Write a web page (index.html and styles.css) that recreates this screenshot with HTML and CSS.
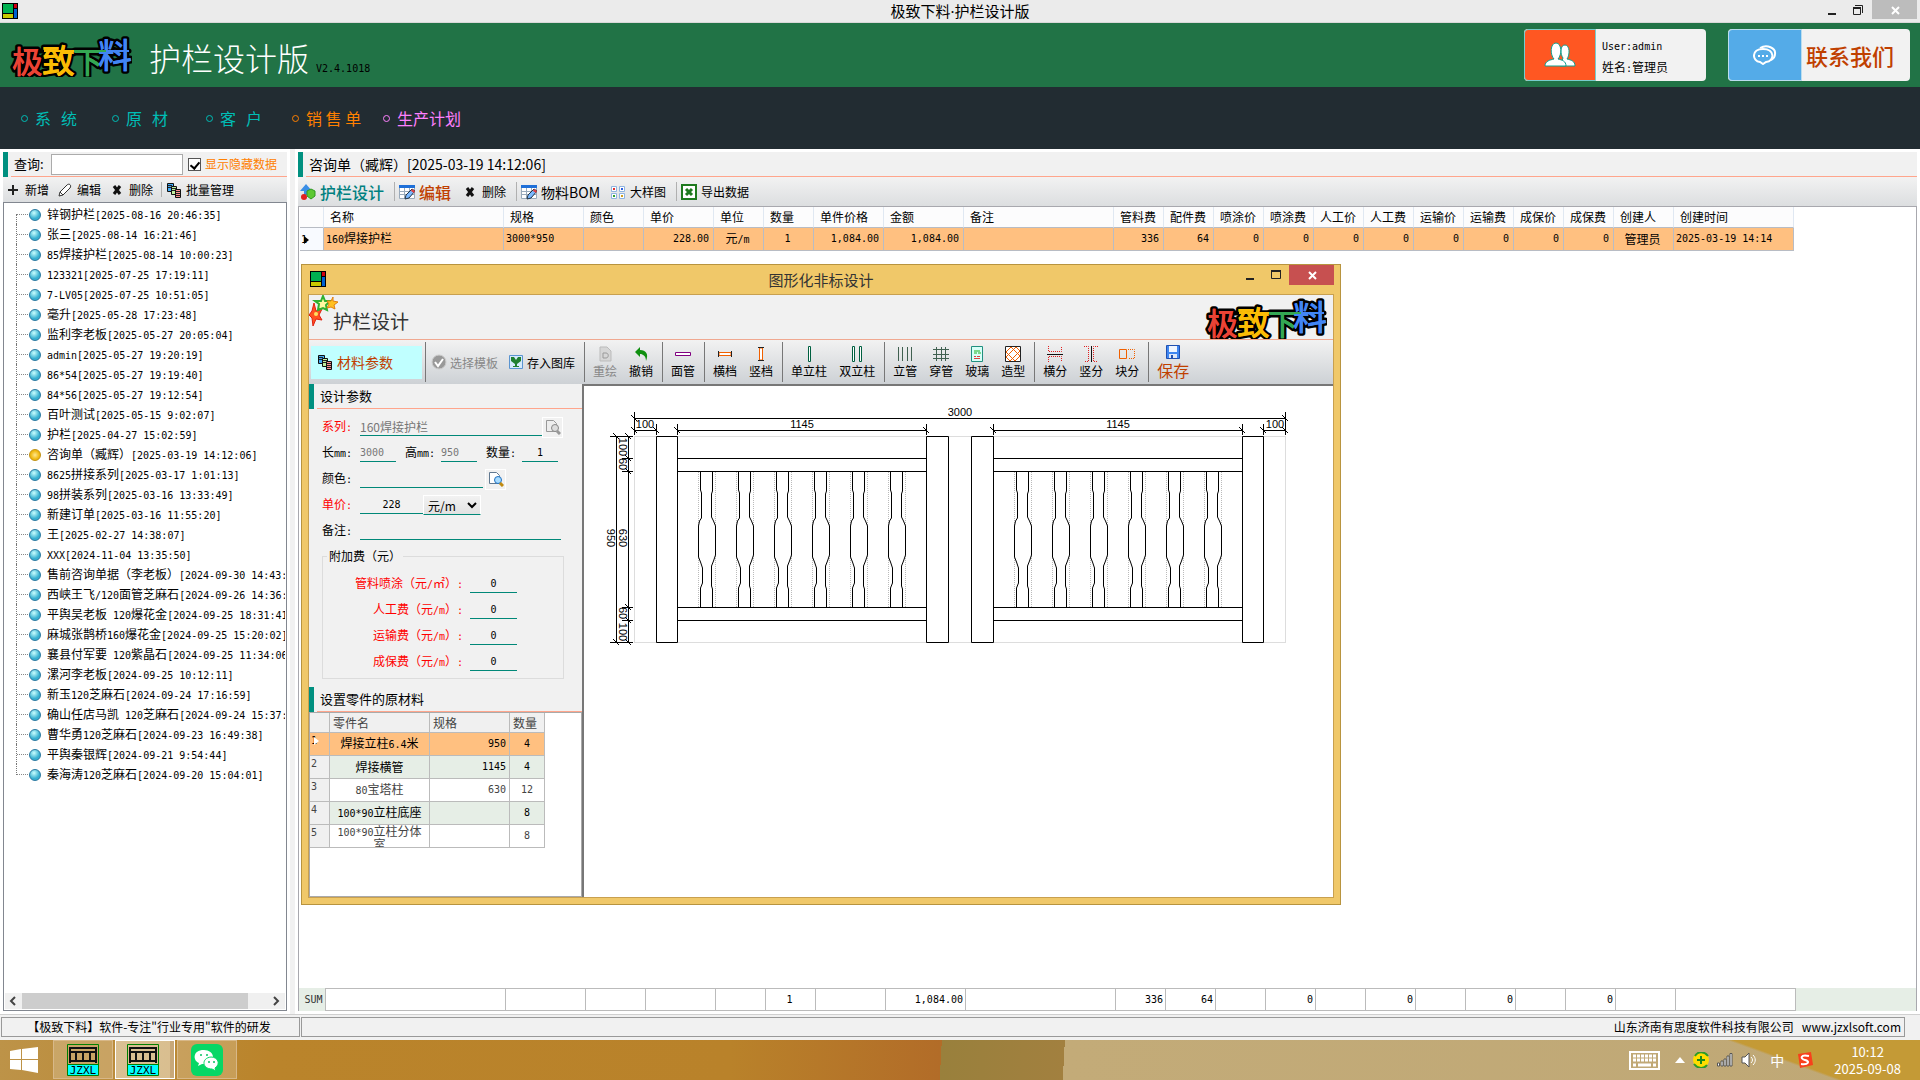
FILE: index.html
```html
<!DOCTYPE html>
<html lang="zh-CN">
<head>
<meta charset="utf-8">
<title>极致下料·护栏设计版</title>
<link rel="stylesheet" href="styles.css">
</head>
<body>
<svg class="defs" aria-hidden="true">
  <symbol id="app" viewBox="0 0 16 16"><path fill="#000" d="M0 0h16v16H0z"/><path fill="#00b050" d="M1 1h10v9H1z"/><path fill="#c8c800" d="M1 11h10v4H1z"/><path fill="#d00010" d="M12 1h3v4h-3z"/><path fill="#0060d0" d="M12 6h3v9h-3z"/></symbol>
  <symbol id="logo" viewBox="-2 0 122 44">
    <g stroke-linecap="round" stroke-linejoin="round" paint-order="stroke" stroke="#000" stroke-width="5" font-weight="500">
      <path d="M6 18H117" fill="none"/>
      <text x="0" y="40" font-size="31" fill="#ea4335">极</text>
      <text x="30" y="40" font-size="33" fill="#fbbc05">致</text>
      <text x="61" y="40" font-size="30" fill="#34a853">下</text>
      <text x="86" y="35" font-size="34" fill="#4285f4">料</text>
    </g>
    <g font-weight="500">
      <text x="0" y="40" font-size="31" fill="#ea4335">极</text>
      <text x="30" y="40" font-size="33" fill="#fbbc05">致</text>
      <text x="61" y="40" font-size="30" fill="#34a853">下</text>
      <text x="86" y="35" font-size="34" fill="#4285f4">料</text>
    </g>
    <path d="M32 18h30" stroke="#fbbc05" stroke-width="2"/><path d="M62 18h32" stroke="#34a853" stroke-width="2"/><path d="M94 18h23" stroke="#4285f4" stroke-width="2"/>
  </symbol>
  <symbol id="plus" viewBox="0 0 16 16"><path d="M8 3v10M3 8h10" stroke="#222" stroke-width="2"/></symbol>
  <symbol id="pencil" viewBox="0 0 16 16"><path d="M2 14l1-4 7-7c2-2 5 0 3 3l-7 7zM3 10l3 3" fill="#fff" stroke="#333"/></symbol>
  <symbol id="cross" viewBox="0 0 16 16"><path d="M5 4l6 8M11 4l-6 8" stroke="#111" stroke-width="3"/></symbol>
  <symbol id="sheets" viewBox="0 0 16 16"><g stroke="#111"><path fill="#3fa9f5" d="M1.500 1.500h6v8h-6z"/><path fill="#bff0a0" d="M5.500 4.500h5v8h-5z"/><path fill="#ff9090" d="M9.500 7.500h5v8h-5z"/></g><path d="M2 3.500h4M2 5.500h3M6 6.500h4M6 8.500h3M10 9.500h4M10 11.500h4M10 13.500h4" stroke="#222"/></symbol>
  <symbol id="shapes" viewBox="0 0 16 16"><path fill="#3a8ee6" d="M6 0l6 7H9v4H4V7H0z"/><path fill="#5cc832" stroke="#2e9a20" d="M7 7l4-2 4 2v5l-4 3-4-3z"/><circle cx="4" cy="13" r="3" fill="#e02020"/></symbol>
  <symbol id="gridpen" viewBox="0 0 16 16"><path d="M.5 1.500h15v13H.5zM1 7.500h14M1 10.500h14M5.500 4v11M10.500 4v11" fill="#fff" stroke="#9ab"/><path d="M0 1h16v3H0z" fill="#1e6fd8"/><path d="M6 15l1-4 6-6 3 2-6 7z" fill="#7ab8ff" stroke="#234"/><path d="M13 5l3 2-1 2-3-2z" fill="#e04040"/></symbol>
  <symbol id="tiles" viewBox="0 0 16 16"><g fill="#fff" stroke="#8fb4e0"><path d="M1.500 2.500h5v5h-5zM9.500 2.500h5v5h-5zM1.500 9.500h5v5h-5zM9.500 9.500h5v5h-5z"/></g><path fill="#e03030" d="M3 4h2v2H3z"/><path fill="#3060e0" d="M11 4h2v2h-2z"/><path fill="#30a030" d="M3 11h2v2H3z"/><path fill="#d0a020" d="M11 11h2v2h-2z"/></symbol>
  <symbol id="excel" viewBox="0 0 16 16"><path fill="#fff" stroke="#1e7a1e" stroke-width="2" d="M1 1h14v14H1z"/><path d="M5 5l6 6M11 5l-6 6" stroke="#1e7a1e" stroke-width="3"/></symbol>
  <symbol id="people" viewBox="0 0 32 26"><g fill="#fff" stroke="#10a090"><path d="M16 24h15c0-5-4-6-8-7 3-4 3-14-2-14s-5 9-2 13z"/><path d="M1 24h21c0-5-4-6-8-7 4-4 4-16-2-16s-6 12-2 16c-4 1-9 2-9 7z"/></g></symbol>
  <symbol id="chat" viewBox="0 0 24 20"><g fill="none" stroke="#fff" stroke-width="2"><path d="M7 3c7-4 16 0 15 6 0 3-2 5-4 6"/><path fill="#54abe8" d="M10 4c12 0 12 12 3 13l-3 2-3-2C-1 16-2 4 10 4z"/></g><path fill="#fff" d="M5 10h2v2H5zM9 10h2v2H9zM13 10h2v2h-2z"/></symbol>
  <symbol id="stars" viewBox="0 0 30 32"><path fill="#ff5020" stroke="#e02010" d="M5 8l2 8 6-2-3 6 3 5-6-1-3 7-1-8-3-3 3-4z"/><path fill="#fff8a0" stroke="#30b030" stroke-width="2" d="M14 1l2 5 5 0-4 4 1 5-4-2-5 2 1-6-4-3h6z"/><path fill="#ffc020" stroke="#e08010" d="M24 2v4l5 1-4 3 1 4-4-2-4 1 2-4-2-3h4z"/><circle cx="7" cy="19" r="2" fill="#ffe060"/></symbol>
  <symbol id="check" viewBox="0 0 16 16"><circle cx="8" cy="8" r="7" fill="#999" stroke="#ccc"/><path d="M4 8l3 4 5-7" fill="none" stroke="#fff" stroke-width="2"/></symbol>
  <symbol id="store" viewBox="0 0 16 16"><path fill="#d4eafc" stroke="#5a94d0" d="M1.500 1.500h13v13h-13z"/><path fill="#208030" d="M3 3h3l2 3 2-3h3v4l-4 3v2h2v1H5v-1h2v-2L3 7z"/></symbol>
  <symbol id="redraw" viewBox="0 0 16 16"><path fill="#d6d6d6" stroke="#bbb" d="M3 1h7l4 4v10H3z"/><path d="M6 7h3c3 0 3 5 0 5H6z" fill="none" stroke="#999"/></symbol>
  <symbol id="undo" viewBox="0 0 16 16"><path fill="#109010" d="M2 6l5-5v3c6 0 9 4 6 11 0-5-3-7-6-7v3z"/></symbol>
  <symbol id="bar" viewBox="0 0 16 16"><path fill="#fff" stroke="#800080" d="M.5 6.500h15v3H.5z"/></symbol>
  <symbol id="hrail" viewBox="0 0 16 16"><path fill="#fff" stroke="#f06000" d="M2 6.500h12v3H2z"/><path d="M1.500 5v6M14.500 5v6" stroke="#222"/></symbol>
  <symbol id="vrail" viewBox="0 0 16 16"><path fill="#fff" stroke="#f06000" d="M6.500 2h3v12h-3z"/><path d="M5 1.500h6M5 14.500h6" stroke="#222"/></symbol>
  <symbol id="post" viewBox="0 0 16 16"><path fill="#fff" stroke="#006040" d="M7.500 .5h2v15h-2z"/></symbol>
  <symbol id="posts" viewBox="0 0 16 16"><path fill="#fff" stroke="#006040" d="M3.500 .5h2v15h-2zM10.500 .5h2v15h-2z"/></symbol>
  <symbol id="tubes" viewBox="0 0 16 16"><path stroke="#406050" d="M1.500 1v14M5.500 1v14M10.500 1v14M14.500 1v14"/></symbol>
  <symbol id="cross-tubes" viewBox="0 0 16 16"><path stroke="#406050" d="M3.500 1v14M8.500 1v14M12.500 1v14M0 3.500h16M0 8.500h16M0 12.500h16"/></symbol>
  <symbol id="glass" viewBox="0 0 16 16"><path fill="#d8fff8" stroke="#209080" d="M2.500 .5h11v15h-11z"/><path d="M5 5h6M5 7h3M9 7h3" stroke="#20b020"/><path d="M5 10.500h2M8 10.500h3M5 12.500h6" stroke="#e04040"/></symbol>
  <symbol id="lattice" viewBox="0 0 16 16"><path fill="#fff" stroke="#222" d="M.5 .5h15v15H.5z"/><path fill="none" stroke="#f06000" d="M1 6l5-5 9 9M1 11L11 1l4 4M5 15L15 5M1 6l9 9M10 15l5-5M1 11l4 4"/></symbol>
  <symbol id="hsplit" viewBox="0 0 16 16"><path d="M0 8.500h16" stroke="#111"/><path fill="none" stroke="#e02020" stroke-dasharray="1 1" d="M1.500 0v5.500h13V0M1.500 16v-5.500h13V16"/></symbol>
  <symbol id="vsplit" viewBox="0 0 16 16"><path d="M8.500 0v16" stroke="#111"/><path fill="none" stroke="#e02020" stroke-dasharray="1 1" d="M1 .5h4.500v15H1M15 .5h-4.500v15H15"/></symbol>
  <symbol id="bsplit" viewBox="0 0 16 16"><path fill="none" stroke="#f06000" d="M.5 3.500h7v9h-7z"/><path fill="none" stroke="#f06000" stroke-dasharray="1 1" d="M9 3.500h6.500v9H9"/></symbol>
  <symbol id="disk" viewBox="0 0 16 16"><path fill="#3f86f0" stroke="#2050b0" d="M1.500 1.500h13v13h-13z"/><path fill="#f0f6ff" d="M4 2h8v6H4z"/><path fill="#dfe8f8" d="M4 10h8v4H4z"/><path fill="#2050b0" d="M6 11h2v3H6z"/></symbol>
  <symbol id="find" viewBox="0 0 16 16"><path fill="#fff" stroke="#607890" d="M1.500 1.500h7l3 3v8h-10z"/><circle cx="10" cy="9" r="3.500" fill="#a8dcff" stroke="#2070c0"/><path d="M12 12l3 3" stroke="#c08a10" stroke-width="3"/></symbol>
  <symbol id="find-off" viewBox="0 0 16 16"><path fill="#eee" stroke="#999" d="M1.500 1.500h7l3 3v8h-10z"/><circle cx="10" cy="9" r="3.500" fill="#ddd" stroke="#888"/><path d="M12 12l3 3" stroke="#999" stroke-width="3"/></symbol>
  <symbol id="min" viewBox="0 0 12 12"><path fill="#222" d="M2 9h8v2H2z"/></symbol>
  <symbol id="max" viewBox="0 0 12 12"><path fill="none" stroke="#222" d="M1.500 2.500h9v7h-9z"/><path fill="#222" d="M1 1h10v2H1z"/></symbol>
  <symbol id="restore" viewBox="0 0 12 12"><path fill="none" stroke="#222" d="M1.500 3.500h7v7h-7zM3 1.500h7.500V9"/><path fill="#222" d="M1 3h8v2H1z"/></symbol>
  <symbol id="close" viewBox="0 0 12 12"><path stroke="#fff" stroke-width="2" d="M3 3l7 7M10 3l-7 7"/></symbol>
  <symbol id="jzxl" viewBox="0 0 32 32"><path fill="none" stroke="#008000" d="M.5 .5h31v31H.5z"/><path fill="#0ff" d="M1 21h30v10H1z"/><path fill="none" stroke="#111" stroke-width="2" d="M3 3v16M29 3v16M2 4h28M2 8h28M2 17h28M9 8v9M16 8v9M23 8v9"/><path stroke="#008000" d="M0 20.500h32"/><text x="16" y="30" text-anchor="middle" font-family="DejaVu Sans Mono" font-size="11">JZXL</text></symbol>
</svg>

<header class="titlebar">
  <svg class="i16 title-icon"><use href="#app"/></svg>
  <h1>极致下料<span class="dot">·</span>护栏设计版</h1>
  <div class="winbtns">
    <button aria-label="最小化"><svg><use href="#min"/></svg></button><button aria-label="还原"><svg><use href="#restore"/></svg></button><button class="grey" aria-label="关闭"><svg><use href="#close"/></svg></button>
  </div>
</header>

<div class="banner">
  <svg class="logo"><use href="#logo"/></svg>
  <span class="product">护栏设计版</span><span class="version n">V2.4.1018</span>
  <div class="card user"><span class="pic orange"><svg width="32" height="26"><use href="#people"/></svg></span><p><span class="n">User:admin</span><br>姓名<span class="n">:</span>管理员</p></div>
  <a class="card contact" href="#contact"><span class="pic blue"><svg width="24" height="20"><use href="#chat"/></svg></span><strong>联系我们</strong></a>
</div>

<nav class="menu">
  <a href="#sys"><i></i>系<b></b>统</a><a href="#raw"><i></i>原<b></b>材</a><a href="#cust"><i></i>客<b></b>户</a><a class="sale" href="#sale"><i></i>销 售 单</a><a class="plan" href="#plan"><i></i>生产计划</a>
</nav>

<main>
  <section class="side">
    <div class="head"><div class="search"><label for="q">查询:</label><input id="q" type="text"><input id="hid" type="checkbox" checked><label for="hid" class="hid">显示隐藏数据</label></div></div>
    <div class="tools side-tools">
      <button><svg><use href="#plus"/></svg>新增</button><button><svg><use href="#pencil"/></svg>编辑</button><button><svg><use href="#cross"/></svg>删除</button><span class="sep"></span><button><svg><use href="#sheets"/></svg>批量管理</button>
    </div>
    <div class="treebox">
      <ul class="tree">
        <li>锌钢护栏<span class="n">[2025-08-16 20:46:35]</span></li>
        <li>张三<span class="n">[2025-08-14 16:21:46]</span></li>
        <li><span class="n">85</span>焊接护栏<span class="n">[2025-08-14 10:00:23]</span></li>
        <li><span class="n">123321[2025-07-25 17:19:11]</span></li>
        <li><span class="n">7-LV05[2025-07-25 10:51:05]</span></li>
        <li>毫升<span class="n">[2025-05-28 17:23:48]</span></li>
        <li>监利李老板<span class="n">[2025-05-27 20:05:04]</span></li>
        <li><span class="n">admin[2025-05-27 19:20:19]</span></li>
        <li><span class="n">86*54[2025-05-27 19:19:40]</span></li>
        <li><span class="n">84*56[2025-05-27 19:12:54]</span></li>
        <li>百叶测试<span class="n">[2025-05-15 9:02:07]</span></li>
        <li>护栏<span class="n">[2025-04-27 15:02:59]</span></li>
        <li class="current">咨询单（臧辉）<span class="n">[2025-03-19 14:12:06]</span></li>
        <li><span class="n">8625</span>拼接系列<span class="n">[2025-03-17 1:01:13]</span></li>
        <li><span class="n">98</span>拼装系列<span class="n">[2025-03-16 13:33:49]</span></li>
        <li>新建订单<span class="n">[2025-03-16 11:55:20]</span></li>
        <li>王<span class="n">[2025-02-27 14:38:07]</span></li>
        <li><span class="n">XXX[2024-11-04 13:35:50]</span></li>
        <li>售前咨询单据（李老板）<span class="n">[2024-09-30 14:43:</span></li>
        <li>西峡王飞<span class="n">/120</span>面管芝麻石<span class="n">[2024-09-26 14:36:</span></li>
        <li>平舆吴老板<span class="n"> 120</span>爆花金<span class="n">[2024-09-25 18:31:41</span></li>
        <li>麻城张鹊桥<span class="n">160</span>爆花金<span class="n">[2024-09-25 15:20:02]</span></li>
        <li>襄县付军要<span class="n"> 120</span>紫晶石<span class="n">[2024-09-25 11:34:06</span></li>
        <li>漯河李老板<span class="n">[2024-09-25 10:12:11]</span></li>
        <li>新玉<span class="n">120</span>芝麻石<span class="n">[2024-09-24 17:16:59]</span></li>
        <li>确山任店马凯<span class="n"> 120</span>芝麻石<span class="n">[2024-09-24 15:37:</span></li>
        <li>曹华勇<span class="n">120</span>芝麻石<span class="n">[2024-09-23 16:49:38]</span></li>
        <li>平舆秦银辉<span class="n">[2024-09-21 9:54:44]</span></li>
        <li>秦海涛<span class="n">120</span>芝麻石<span class="n">[2024-09-20 15:04:01]</span></li>
      </ul>
      <div class="hscroll"><svg><path d="M10 4L6 8l4 4" fill="none" stroke="#444" stroke-width="2"/></svg><span class="track"><span class="thumb"></span></span><svg><path d="M6 4l4 4-4 4" fill="none" stroke="#444" stroke-width="2"/></svg></div>
    </div>
  </section>
  <div class="splitter"></div>

  <section class="work">
    <div class="head"><h2>咨询单（臧辉）[2025-03-19 14:12:06]</h2></div>
    <div class="tools work-tools">
      <button class="big teal"><svg><use href="#shapes"/></svg>护栏设计</button><span class="sep"></span><button class="big rust"><svg><use href="#gridpen"/></svg>编辑</button><button><svg><use href="#cross"/></svg>删除</button><span class="sep"></span><button class="mid"><svg><use href="#gridpen"/></svg>物料BOM</button><button><svg><use href="#tiles"/></svg>大样图</button><span class="sep"></span><button><svg><use href="#excel"/></svg>导出数据</button>
    </div>
    <div class="sheet">
      <table class="data">
        <colgroup><col class="w24"><col class="w180"><col class="w80"><col class="w60"><col class="w70"><col class="w50"><col class="w50"><col class="w70"><col class="w80"><col class="w150"><col class="w50" span="10"><col class="w60"><col class="w120"></colgroup>
        <thead><tr><th></th><th>名称</th><th>规格</th><th>颜色</th><th>单价</th><th>单位</th><th>数量</th><th>单件价格</th><th>金额</th><th>备注</th><th>管料费</th><th>配件费</th><th>喷涂价</th><th>喷涂费</th><th>人工价</th><th>人工费</th><th>运输价</th><th>运输费</th><th>成保价</th><th>成保费</th><th>创建人</th><th>创建时间</th></tr></thead>
        <tbody><tr><td class="rowhead"><span class="n">1</span><svg width="6" height="8"><path d="M0 0l5 4-5 4z"/></svg></td><td><span class="n">160</span>焊接护栏</td><td class="n">3000*950</td><td></td><td class="n r">228.00</td><td class="c">元<span class="n">/m</span></td><td class="n c">1</td><td class="n r">1,084.00</td><td class="n r">1,084.00</td><td></td><td class="n r">336</td><td class="n r">64</td><td class="n r">0</td><td class="n r">0</td><td class="n r">0</td><td class="n r">0</td><td class="n r">0</td><td class="n r">0</td><td class="n r">0</td><td class="n r">0</td><td class="c">管理员</td><td class="n">2025-03-19 14:14</td></tr></tbody>
      </table>
      <div class="sumbar">
        <table class="sum">
          <colgroup><col class="w24"><col class="w180"><col class="w80"><col class="w60"><col class="w70"><col class="w50"><col class="w50"><col class="w70"><col class="w80"><col class="w150"><col class="w50" span="10"><col class="w60"><col class="w120"></colgroup>
          <tr class="n"><th scope="row">SUM</th><td></td><td></td><td></td><td></td><td></td><td class="c">1</td><td></td><td>1,084.00</td><td></td><td>336</td><td>64</td><td></td><td>0</td><td></td><td>0</td><td></td><td>0</td><td></td><td>0</td><td></td><td></td></tr>
        </table>
      </div>
    </div>

    <div class="dialog" role="dialog" aria-label="图形化非标设计">
      <div class="dlg-title">
        <svg class="i16"><use href="#app"/></svg><h2>图形化非标设计</h2>
        <div class="winbtns"><button aria-label="最小化"><svg><use href="#min"/></svg></button><button aria-label="最大化"><svg><use href="#max"/></svg></button><button class="red" aria-label="关闭"><svg><use href="#close"/></svg></button></div>
      </div>
      <div class="dlg-body">
        <div class="dlg-head"><svg class="stars"><use href="#stars"/></svg><h3>护栏设计</h3><svg class="logo"><use href="#logo"/></svg></div>
        <div class="ribbon">
          <button class="params"><svg><use href="#sheets"/></svg>材料参数</button><span class="sep"></span>
          <button class="flat" disabled><svg><use href="#check"/></svg>选择模板</button><button class="flat"><svg><use href="#store"/></svg>存入图库</button><span class="sep"></span>
          <button disabled><svg><use href="#redraw"/></svg>重绘</button><button><svg><use href="#undo"/></svg>撤销</button><span class="sep"></span>
          <button><svg><use href="#bar"/></svg>面管</button><span class="sep"></span>
          <button><svg><use href="#hrail"/></svg>横档</button><button><svg><use href="#vrail"/></svg>竖档</button><span class="sep"></span>
          <button><svg><use href="#post"/></svg>单立柱</button><button><svg><use href="#posts"/></svg>双立柱</button><span class="sep"></span>
          <button><svg><use href="#tubes"/></svg>立管</button><button><svg><use href="#cross-tubes"/></svg>穿管</button><button><svg><use href="#glass"/></svg>玻璃</button><button><svg><use href="#lattice"/></svg>造型</button><span class="sep"></span>
          <button><svg><use href="#hsplit"/></svg>横分</button><button><svg><use href="#vsplit"/></svg>竖分</button><button><svg><use href="#bsplit"/></svg>块分</button><span class="sep"></span>
          <button class="save"><svg><use href="#disk"/></svg>保存</button>
        </div>
        <div class="dlg-main">
          <div class="props">
            <div class="head"><h4>设计参数</h4></div>
            <form class="form">
              <div class="row"><label class="red-l" for="f1">系列<span class="n">:</span></label><input id="f1" class="wide" disabled value="160焊接护栏"><button type="button" disabled aria-label="查找系列"><svg><use href="#find-off"/></svg></button></div>
              <div class="row"><label for="f2">长<span class="n">mm:</span></label><input id="f2" class="n w36" disabled value="3000"><label for="f3" class="second">高<span class="n">mm:</span></label><input id="f3" class="n w36" disabled value="950"><label for="f4" class="second">数量<span class="n">:</span></label><input id="f4" class="n w36 c" value="1"></div>
              <div class="row"><label for="f5">颜色<span class="n">:</span></label><input id="f5" class="color"><button type="button" aria-label="查找颜色"><svg><use href="#find"/></svg></button></div>
              <div class="row"><label class="red-l" for="f6">单价<span class="n">:</span></label><input id="f6" class="n price c" value="228"><select aria-label="单位"><option>元/m</option></select></div>
              <div class="row"><label for="f7">备注<span class="n">:</span></label><input id="f7" class="memo"></div>
              <fieldset>
                <legend>附加费（元）</legend>
                <div class="fee"><label for="g1">管料喷涂（元<span class="n">/</span>㎡）<span class="n">:</span></label><input id="g1" class="n c" value="0"></div>
                <div class="fee"><label for="g2">人工费（元<span class="n">/m</span>）<span class="n">:</span></label><input id="g2" class="n c" value="0"></div>
                <div class="fee"><label for="g3">运输费（元<span class="n">/m</span>）<span class="n">:</span></label><input id="g3" class="n c" value="0"></div>
                <div class="fee"><label for="g4">成保费（元<span class="n">/m</span>）<span class="n">:</span></label><input id="g4" class="n c" value="0"></div>
              </fieldset>
            </form>
            <div class="head"><h4>设置零件的原材料</h4></div>
            <div class="parts-box">
              <table class="parts">
                <colgroup><col class="w20"><col class="w100"><col class="w80"><col class="w35"></colgroup>
                <thead><tr><th></th><th>零件名</th><th>规格</th><th>数量</th></tr></thead>
                <tbody>
                  <tr class="sel"><td class="n">1<svg width="6" height="8"><path fill="#fff" d="M0 0l5 4-5 4z"/></svg></td><td>焊接立柱<span class="n">6.4</span>米</td><td class="n">950</td><td class="n">4</td></tr>
                  <tr><td class="n">2</td><td>焊接横管</td><td class="n">1145</td><td class="n">4</td></tr>
                  <tr><td class="n">3</td><td><span class="n">80</span>宝塔柱</td><td class="n">630</td><td class="n">12</td></tr>
                  <tr><td class="n">4</td><td><span class="n">100*90</span>立柱底座</td><td></td><td class="n">8</td></tr>
                  <tr><td class="n">5</td><td><div class="clip"><span class="n">100*90</span>立柱分体<br>室</div></td><td></td><td class="n">8</td></tr>
                </tbody>
              </table>
            </div>
          </div>
          <div class="canvas">
            <svg width="748" height="508" viewBox="584 386 748 508" fill="none" stroke="#000" font-family="Liberation Sans" font-size="11">
              <defs>
                <g id="bal"><path stroke="#bbb" stroke-dasharray="1 1" d="M.5 472v135M17.500 472v135"/><path d="M2.500 471v19l1 3v25l-2 3-1 5v31l2 5 2 6v15l-2 5v20M14.500 471v20l-1 3v23l2 4 2 5v29l-2 6-2 5v20l1 3v18"/></g>
                <g id="bay"><use href="#bal" x="698"/><use href="#bal" x="736"/><use href="#bal" x="774"/><use href="#bal" x="812"/><use href="#bal" x="850"/><use href="#bal" x="888"/><path d="M677 458.500h249M677 471.500h249M677 607.500h249M677 620.500h249"/></g>
                <path id="tk" d="M-3 -3l6 6"/>
              </defs>
              <path stroke="#bbb" stroke-dasharray="1 1" d="M634.500 436.500h651v206h-651z"/>
              <g fill="#fff"><path d="M656.500 436.500h21v206h-21zM926.500 436.500h22v206h-22zM971.500 436.500h22v206h-22zM1242.500 436.500h21v206h-21z"/></g>
              <use href="#bay"/><use href="#bay" x="316"/>
              <path d="M634 418.500h652M634.500 412v23M1285.500 412v23M634 430.500h22M656.500 424v11M677.500 424v11M926.500 424v11M677 430.500h249M993.500 424v11M1242.500 424v11M993 430.500h249M1263.500 424v11M1263 430.500h22"/>
              <path d="M616.500 436v207M628.500 436v207M610 436.500h23M610 642.500h23M622 458.500h11M622 471.500h11M622 607.500h11M622 620.500h11"/>
              <use href="#tk" x="634" y="418"/><use href="#tk" x="1285" y="418"/><use href="#tk" x="634" y="430"/><use href="#tk" x="656" y="430"/><use href="#tk" x="677" y="430"/><use href="#tk" x="926" y="430"/><use href="#tk" x="993" y="430"/><use href="#tk" x="1242" y="430"/><use href="#tk" x="1263" y="430"/><use href="#tk" x="1285" y="430"/>
              <use href="#tk" x="616" y="436"/><use href="#tk" x="616" y="642"/><use href="#tk" x="628" y="436"/><use href="#tk" x="628" y="458"/><use href="#tk" x="628" y="471"/><use href="#tk" x="628" y="607"/><use href="#tk" x="628" y="620"/><use href="#tk" x="628" y="642"/>
              <g fill="#000" stroke="none" text-anchor="middle">
                <text x="960" y="416">3000</text><text x="802" y="428">1145</text><text x="1118" y="428">1145</text><text x="645" y="428">100</text><text x="1275" y="428">100</text>
                <text transform="translate(607 538) rotate(90)">950</text><text transform="translate(619 538) rotate(90)">630</text><text transform="translate(619 447) rotate(90)">100</text><text transform="translate(619 464) rotate(90)">60</text><text transform="translate(619 613) rotate(90)">60</text><text transform="translate(619 632) rotate(90)">100</text>
              </g>
            </svg>
          </div>
        </div>
      </div>
    </div>
  </section>
</main>

<footer class="status"><span class="c">【极致下料】软件-专注"行业专用"软件的研发</span><span class="r">山东济南有思度软件科技有限公司<a href="#site">www.jzxlsoft.com</a></span></footer>

<div class="taskbar">
  <button class="start" aria-label="开始"><svg width="28" height="26"><path fill="#fff" d="M0 4l11-2v10H0zM12 2l16-2v12H12zM0 13h11v10L0 22zM12 13h16v13l-16-3z"/></svg></button>
  <button class="task" aria-label="JZXL"><svg><use href="#jzxl"/></svg></button><button class="task on" aria-label="JZXL"><svg><use href="#jzxl"/></svg></button>
  <button class="task" aria-label="微信"><svg viewBox="0 0 32 32"><rect width="32" height="32" rx="6" fill="#07d765"/><g fill="#fff"><path d="M13 6c-12 0-11 11-5 13l-1 3 4-2c8 1 12-3 11-7 0-4-4-7-9-7z"/><path stroke="#07d765" d="M20 13c-10 1-9 12 1 12l4 2-1-3c6-4 3-11-4-11z"/></g><g fill="#07c160"><circle cx="10" cy="11" r="1"/><circle cx="16" cy="11" r="1"/><circle cx="18" cy="18" r="1"/><circle cx="23" cy="18" r="1"/></g></svg></button>
  <div class="tray">
    <svg class="kbd" width="31" height="19"><path fill="none" stroke="#fff" stroke-width="2" d="M1 1h29v17H1z"/><path stroke="#fff" stroke-width="3" stroke-dasharray="3 1" d="M4 5h24M4 9h24"/><path stroke="#fff" stroke-width="3" d="M4 14h3M9 14h13M24 14h3"/></svg>
    <svg width="10" height="6"><path fill="#fff" d="M0 6l5-6 5 6z"/></svg>
    <svg class="i16"><circle cx="8" cy="8" r="8" fill="#fd0"/><path d="M2 4c3-5 9-5 13 0M1 12c4 5 10 5 13 1" fill="none" stroke="#2a9a2a" stroke-width="2"/><path d="M8 4v8M4 8h8" stroke="#1a8a1a" stroke-width="2"/></svg>
    <svg class="i16"><path fill="#fff" stroke="#555" d="M.5 11h2v3h-2zM4 9h2v5H4zM7 7h2v7H7zM10 4h2v10h-2zM13 1.500h2V14h-2z"/></svg>
    <svg class="i16"><path fill="#fff" stroke="#555" d="M1 5h3l4-4v14l-4-4H1z"/><path fill="none" stroke="#fff" d="M10 5c2 2 2 4 0 6M12 3c3 3 3 7 0 10"/></svg>
    <span class="ime">中</span>
    <svg class="i16"><path fill="#f8401c" d="M1 2l13-2 2 13-13 3z"/><path d="M12 4c-9-2-9 3-4 4s4 5-4 4" fill="none" stroke="#fff" stroke-width="2"/></svg>
    <div class="clock">10:12<br>2025-09-08</div>
  </div>
</div>
</body>
</html>
```

FILE: styles.css
```css
* { box-sizing: border-box; }
html { height: 100%; }
body {
  margin: 0; min-height: 100%; display: flex; flex-direction: column;
  font: 12px/16px "Noto Sans CJK SC", sans-serif; color: #000; background: #fff; overflow: hidden;
}
h1, h2, h3, h4, p, ul, fieldset { margin: 0; padding: 0; font-weight: normal; }
button { font: inherit; color: inherit; border: 0; background: none; padding: 0; margin: 0; white-space: nowrap; }
input, select { font: inherit; }
a { color: inherit; text-decoration: none; }
svg { flex: none; }
.defs { display: none; }
.n { font-family: "DejaVu Sans Mono", monospace; font-size: 10px; white-space: pre; }
.c { text-align: center; }
.r { text-align: right; }
.i16 { width: 16px; height: 16px; }

/* window title */
.titlebar { height: 23px; display: grid; grid-template-columns: 1fr auto 1fr; background: #ebebeb; border-bottom: 1px solid #d8d8d8; }
.titlebar h1 { font-size: 15px; line-height: 22px; }
.dot { font-family: "Noto Sans", sans-serif; }
.title-icon { margin: 3px 2px; }
.winbtns { display: flex; justify-content: flex-end; padding-right: 3px; }
.winbtns button { width: 26px; height: 19px; display: grid; place-items: center; }
.winbtns svg { width: 12px; height: 12px; }
.winbtns .grey { width: 45px; margin-left: 1px; background: #bcbcbc; }
.winbtns .red { width: 45px; height: 20px; background: #c75050; }

/* product banner */
.banner { height: 64px; display: flex; align-items: center; background: #217346; padding: 0 10px; }
.logo { width: 122px; height: 44px; }
.product { font-size: 32px; line-height: 40px; font-weight: 300; color: #fff; margin: 4px 0 0 17px; }
.version { align-self: flex-end; margin: 0 auto 10px 7px; }
.card { height: 52px; width: 182px; display: flex; align-items: center; background: #f2f2f2; border-radius: 4px; overflow: hidden; margin-left: 22px; }
.pic { width: 72px; height: 52px; display: grid; place-items: center; border: 1px solid #7cc; border-radius: 4px 0 0 4px; }
.blue { width: 74px; }
.orange { background: #ff5722; }
.blue { background: #54abe8; border-color: #bde; }
.card p { margin: 4px 0 0 6px; line-height: 20px; }
.card strong { font-size: 22px; font-weight: 500; color: #c04000; margin-left: 4px; }

.menu { height: 62px; display: flex; align-items: center; background: #222c32; color: #00bdb5; font-size: 16px; line-height: 24px; padding-left: 21px; }
.menu a { display: flex; align-items: center; width: 94px; white-space: pre; }
.menu a:nth-child(1) { width: 91px; }
.menu a:nth-child(3) { width: 86px; }
.menu i { width: 7px; height: 7px; border: 1px solid; border-radius: 50%; margin: 1px 7px 0 0; }
.menu b { width: 10px; }
.menu .sale { color: #ff8000; width: 91px; }
.menu .plan { color: #ff80ff; }

/* body */
main { flex: 1; display: grid; grid-template-columns: 284px 11px minmax(0, 1fr); padding: 3px; min-height: 0; }
.splitter { margin: -3px 3px; background: #f1f1f1; }
.side, .work { display: flex; flex-direction: column; min-height: 0; min-width: 0; }
.work { position: relative; }
.head { height: 25px; display: flex; gap: 3px; background: #f1f1f1; flex: none; }
.head::before { content: ""; width: 5px; background: #009080; }
.head > * { flex: 1; border-bottom: 1px solid #ffa58c; }
.head h2 { font-size: 14px; line-height: 25px; padding-left: 3px; }
.head h4 { font-size: 13px; line-height: 24px; padding-left: 3px; }
.search { display: flex; align-items: center; padding-left: 3px; }
.search label { font-size: 13px; width: 37px; }
.search input[type=text] { width: 132px; height: 21px; border: 1px solid #ababab; background: #fff; }
.search input[type=checkbox] { appearance: none; width: 13px; height: 13px; margin: 0 4px 0 5px; border: 1px solid #555; background: #fff; display: grid; place-items: center; }
.search input[type=checkbox]::after { content: ""; width: 4px; height: 7px; border: solid #000; border-width: 0 2px 2px 0; transform: rotate(40deg); }
.search .hid { font-size: 12px; width: auto; color: #ff8000; }

.tools { display: flex; align-items: center; background: linear-gradient(#f2f2f2, #dcdee0); flex: none; }
.tools button { display: flex; align-items: center; gap: 4px; }
.tools svg { width: 16px; height: 16px; }
.sep { width: 1px; align-self: stretch; background: #b0b0b0; margin: 5px 4px; }
.side-tools { height: 25px; padding-left: 2px; gap: 8px; }
.side-tools .sep { margin: 5px -4px 5px 0; }
.work-tools { height: 29px; padding-left: 2px; }
.work-tools .sep { margin: 5px 4px 5px 10px; }
.tools .mid { font-size: 14px; margin-right: 10px; }
.tools .big { font-size: 16px; font-weight: 500; }
.big + button { margin-left: 11px; }
.teal { color: #008080; }
.rust { color: #c04000; }

.treebox { flex: 1; display: flex; flex-direction: column; border: 1px solid #828790; padding: 1px; min-height: 0; overflow: hidden; }
.tree { flex: 1; list-style: none; overflow: hidden; white-space: nowrap; }
.tree li { position: relative; height: 20px; line-height: 20px; padding-left: 42px; }
.tree li::before { content: ""; position: absolute; left: 11px; top: 0; width: 12px; height: 20px; border-left: 1px dotted #777; background: linear-gradient(90deg, #888 50%, transparent 50%) 0 10px / 2px 1px repeat-x; }
.tree li:first-child::before { top: 10px; height: 10px; background-position: 0 0; }
.tree li:last-child::before { height: 11px; }
.tree li::after { content: ""; position: absolute; left: 24px; top: 5px; width: 10px; height: 10px; border-radius: 50%; border: 1px solid #2878a0; background: radial-gradient(circle at 40% 30%, #c8ffff, #38b0d0 60%); }
.tree .current::after { border-color: #c09010; background: radial-gradient(circle, #ffe890, #f0b810 60%); }
.hscroll { height: 16px; display: flex; background: #f0f0f0; }
.hscroll svg { width: 17px; height: 16px; }
.track { flex: 1; }
.thumb { display: block; width: 92%; height: 16px; background: #cdcdcd; }

/* order lines */
.sheet { flex: 1; display: flex; flex-direction: column; justify-content: space-between; border: 1px solid #a8a8ae; border-bottom: 0; padding-left: 1px; min-height: 0; overflow: hidden; }
table { border-collapse: separate; border-spacing: 0; table-layout: fixed; }
th, td { font-weight: normal; padding: 0; overflow: hidden; white-space: nowrap; }
.data, .sum { width: 1494px; }
.w20 { width: 20px; } .w24 { width: 24px; } .w35 { width: 35px; } .w50 { width: 50px; } .w60 { width: 60px; } .w70 { width: 70px; } .w80 { width: 80px; } .w100 { width: 100px; } .w120 { width: 120px; } .w150 { width: 150px; } .w180 { width: 180px; }
.data th { height: 21px; text-align: left; padding-left: 6px; border-right: 1px solid #e0e8f2; border-bottom: 1px solid #b8bcc4; background: #fcfcfd; }
.data td { height: 23px; padding: 0 4px 0 2px; background: #ffc080; border-right: 1px solid #b8bcc4; border-bottom: 1px solid #b8bcc4; }
.data .rowhead { background: #f8faff; padding-left: 1px; }
.rowhead svg { vertical-align: middle; margin-left: -3px; }
.sumbar { background: #e6eee6; padding-left: 3px; margin-left: -1px; }
.sum td { height: 23px; background: #fff; text-align: right; padding-right: 2px; border: solid #bbb; border-width: 1px 1px 1px 0; }
.sum .c { text-align: center; }
.sum th { border-right: 1px solid #bbb; color: #333; }

/* designer window */
.dialog { position: absolute; left: 3px; top: 112px; width: 1040px; padding: 0 6px 6px; background: #f0c869; border: 1px solid #b8943f; }
.dlg-title { height: 29px; display: grid; grid-template-columns: 1fr auto 1fr; }
.dlg-title .i16 { margin: 6px 2px; }
.dlg-title h2 { font-size: 15px; line-height: 29px; color: #333; }
.dlg-title .winbtns { padding: 0; }
.dlg-body { border: 1px solid #c8a050; background: #f1f1f1; }
.dlg-head { height: 45px; display: flex; align-items: flex-start; border-bottom: 1px solid #f0a890; }
.stars { width: 30px; height: 32px; margin-right: -6px; }
.dlg-head h3 { font-size: 19px; line-height: 24px; margin-top: 14px; color: #333; }
.dlg-head .logo { margin: 0 6px 0 auto; }
.ribbon { height: 44px; display: flex; align-items: center; background: linear-gradient(#f2f2f2, #cdd1d5); }
.ribbon button { display: flex; flex-direction: column; align-items: center; line-height: 17px; padding: 0 6px; }
.ribbon svg { width: 16px; height: 16px; }
.ribbon .sep { margin: 2px 2px 2px 3px; background: #777; }
.ribbon button:disabled { color: #888; }
.ribbon .params { flex-direction: row; gap: 4px; width: 111px; height: 33px; margin-left: 2px; background: #c0ffff; color: #c04000; font-size: 14px; }
.ribbon .flat { flex-direction: row; gap: 3px; padding: 0 6px 0 3px; }
.ribbon .flat:disabled { padding-right: 7px; }
.ribbon .save { color: #c04000; font-size: 16px; line-height: 21px; }
.dlg-main { display: flex; }
.props { width: 273px; display: flex; flex-direction: column; }
.form { padding: 5px 18px 8px 13px; }
.row { height: 26px; display: flex; align-items: center; }
.row label { width: 38px; white-space: nowrap; }
.row .second { width: 36px; margin-left: 9px; }
.row .red-l, .fee label { color: #f00; }
.form input { height: 18px; border: 0; border-bottom: 1px solid #008878; background: none; padding: 0; outline: 0; color: #000; }
.form input:disabled { color: #777; }
.form .w36 { width: 36px; }
.form .wide { width: 182px; }
.form .color { width: 123px; margin-right: 2px; }
.form .price { width: 63px; }
.form .memo { width: 201px; }
.row button { width: 21px; height: 21px; border: 1px solid #fff; display: grid; place-items: center; flex: none; }
.row button svg { width: 16px; height: 16px; }
.row select { width: 58px; height: 20px; border: 1px solid #fff; border-bottom-color: #008878; background: linear-gradient(#f2f2f2, #e2e2e2); padding: 0; }
fieldset { height: 131px; margin-top: 4px; border: 1px solid #dcdcdc; padding: 7px 46px 0 0; }
legend { margin-left: 4px; padding: 0 2px; }
.fee { height: 26px; display: flex; justify-content: flex-end; align-items: center; gap: 7px; }
.fee input { width: 47px; }
.parts-box { height: 185px; background: #fff; border: 1px solid #aaa; }
.parts { width: 235px; color: #444; }
.parts th { height: 20px; text-align: left; padding-left: 3px; background: #f0f0f0; }
.parts th, .parts td { border-right: 1px solid #bbb; border-bottom: 1px solid #bbb; }
.parts td { height: 23px; text-align: center; background: #fff; }
.parts td:first-child { text-align: left; vertical-align: top; padding-left: 1px; background: #f0f0f0; }
.parts td:nth-child(3) { text-align: right; padding-right: 3px; }
.parts tr:nth-child(even) td + td { background: #e6eee6; color: #000; }
.parts tr.sel td { background: #ffc080; color: #000; }
.parts svg { vertical-align: middle; margin-left: -3px; }
.clip { height: 22px; line-height: 11px; overflow: hidden; }
.canvas { flex: 1; background: #fff; border: solid #777; border-width: 2px 0 0 2px; }
.canvas svg { display: block; }

/* status line and desktop bar */
.status { height: 26px; display: grid; grid-template-columns: 299px 1fr; gap: 1px; padding: 2px 15px 3px 1px; background: #f1f1f1; border-top: 1px solid #d0d0d0; }
.status span { border: 1px solid #999; line-height: 18px; padding-right: 3px; }
.status a { font-size: 12px; margin-left: 8px; }
.taskbar {
  height: 40px; display: flex; align-items: stretch;
  background:
    linear-gradient(200deg, #c49a36 0, #c49a36 55%, transparent 57%) right / 230px 40px no-repeat,
    linear-gradient(93deg, #bd9348 0, #ba842b 14%, #b9822a 38%, #b26c28 49%, #99803c 49%, #a2803f 55.4%, #c3ab78 55.4%, #bfa876 100%);
}
.start { width: 28px; margin: 0 15px 0 10px; display: grid; place-items: center; }
.task { width: 60px; height: 39px; margin-right: 2px; border: 1px solid #d8b888; background: rgba(255, 255, 255, .2); display: grid; place-items: center; }
.task svg { width: 32px; height: 32px; }
.task.on { padding-right: 5px; background: rgba(255, 255, 255, .45); border: 1px solid #fff; box-shadow: inset -5px 0 0 -1px #c8a878; }
.tray { margin-left: auto; display: flex; align-items: center; gap: 8px; color: #fff; }
.tray .kbd { margin-right: 7px; }
.ime { font-size: 14px; width: 14px; margin: 0 5px; }
.clock { font-size: 13px; line-height: 17px; text-align: center; margin: 0 19px 0 13px; }
```
